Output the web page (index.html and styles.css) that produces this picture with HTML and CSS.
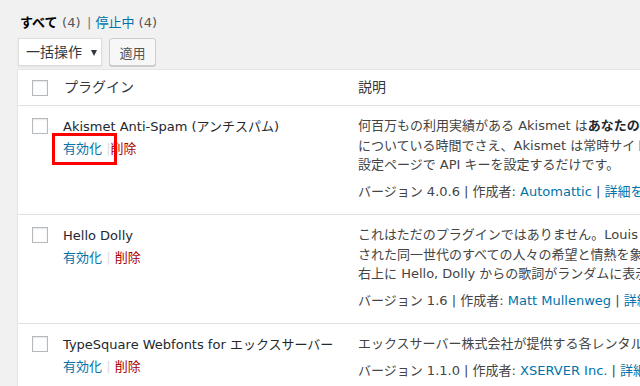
FILE: index.html
```html
<!DOCTYPE html>
<html lang="ja">
<head>
  <meta charset="UTF-8" />
  <title>プラグイン</title>
  <link rel="stylesheet" href="styles.css">
</head>
<body>

  <div class="wrap">
    <!-- Status filters -->
    <ul class="subsubsub">
      <li class="current">すべて <span class="count">(4)</span> <span class="sep">|</span></li>
      <li><a href="#">停止中</a> <span class="count">(4)</span></li>
    </ul>

    <!-- Bulk actions -->
    <div class="tablenav">
      <div class="bulk-select">一括操作<span class="arrow"></span></div>
      <button type="button" class="apply">適用</button>
    </div>

    <table class="plugins">
      <colgroup>
        <col class="col-check">
        <col class="col-title">
        <col class="col-desc">
      </colgroup>
      <thead>
        <tr>
          <th class="check-column"><span class="cb"></span></th>
          <th class="head-title">プラグイン</th>
          <th class="head-desc">説明</th>
        </tr>
      </thead>
      <tbody>
        <tr>
          <th class="check-column"><span class="cb"></span></th>
          <td class="plugin-title">
            <div class="name">Akismet Anti-Spam (アンチスパム)</div>
            <div class="row-actions">
              <span class="marked"><a href="#">有効化</a> | </span><a href="#" class="delete">削除</a>
            </div>
          </td>
          <td class="plugin-desc">
            <p>何百万もの利用実績がある Akismet は<strong>あなたのブログをスパムから保護する最良の方法</strong>といえるでしょう。<br>についている時間でさえ、Akismet は常時サイトを保護し続けます。使い始めるには、Akismet<br>設定ページで API キーを設定するだけです。</p>
            <div class="version">バージョン 4.0.6 | 作成者: <a href="#">Automattic</a> | <a href="#">詳細を表示</a></div>
          </td>
        </tr>
        <tr>
          <th class="check-column"><span class="cb"></span></th>
          <td class="plugin-title">
            <div class="name">Hello Dolly</div>
            <div class="row-actions"><a href="#">有効化</a> | <a href="#" class="delete">削除</a></div>
          </td>
          <td class="plugin-desc">
            <p>これはただのプラグインではありません。Louis Armstrong によって歌われた最も有名な二つの単語に要約<br>された同一世代のすべての人々の希望と情熱を象徴するものなのです。このプラグインを有効にすると、<br>右上に Hello, Dolly からの歌詞がランダムに表示されます。</p>
            <div class="version">バージョン 1.6 | 作成者: <a href="#">Matt Mullenweg</a> | <a href="#">詳細を表示</a></div>
          </td>
        </tr>
        <tr>
          <th class="check-column"><span class="cb"></span></th>
          <td class="plugin-title">
            <div class="name">TypeSquare Webfonts for エックスサーバー</div>
            <div class="row-actions"><a href="#">有効化</a> | <a href="#" class="delete">削除</a></div>
          </td>
          <td class="plugin-desc">
            <p>エックスサーバー株式会社が提供する各レンタルサーバーサービスでWebフォントを利用できるプラグインです。</p>
            <div class="version">バージョン 1.1.0 | 作成者: <a href="#">XSERVER Inc.</a> | <a href="#">詳細を表示</a></div>
          </td>
        </tr>
      </tbody>
    </table>
  </div>

</body>
</html>
```

FILE: styles.css
```css
* {
  box-sizing: border-box;
}

body {
  margin: 0;
  background-color: #f1f1f1;
  color: #444;
  font-family: "DejaVu Sans", "Noto Sans CJK JP", sans-serif;
  font-size: 13px;
  line-height: 19.5px;
  overflow: hidden;
}

a {
  color: #0073aa;
  text-decoration: none;
}

.wrap {
  padding: 13px 0 0 17px;
  width: 1100px;
}

/* status filters */
.subsubsub {
  list-style: none;
  margin: 0 0 6px 3px;
  padding: 0;
  display: flex;
  gap: 4px;
  color: #666;
  line-height: 19px;
}

.subsubsub .current {
  color: #000;
  font-weight: bold;
}

.subsubsub .count {
  color: #555;
  font-weight: normal;
}

.subsubsub .sep {
  color: #72777c;
  font-weight: normal;
  margin-left: 2px;
}

/* bulk actions */
.tablenav {
  display: flex;
  gap: 7px;
  margin: 0 0 3px 1px;
  height: 28px;
}

.bulk-select {
  width: 84px;
  height: 28px;
  background-color: #fff;
  border: 1px solid #ddd;
  box-shadow: 0 1px 2px rgba(0, 0, 0, 0.07);
  color: #32373c;
  font-size: 14px;
  line-height: 26px;
  padding-left: 7px;
  display: flex;
  align-items: center;
}

.bulk-select .arrow {
  width: 0;
  height: 0;
  border-left: 3px solid transparent;
  border-right: 3px solid transparent;
  border-top: 6px solid #32373c;
  margin: 2px 0 0 9px;
}

.apply {
  width: 47px;
  height: 28px;
  padding: 0;
  background-color: #f7f7f7;
  border: 1px solid #ccc;
  border-radius: 3px;
  box-shadow: 0 1px 0 #ccc;
  color: #555;
  font-family: inherit;
  font-size: 13px;
  cursor: pointer;
}

/* table */
.plugins {
  width: 1000px;
  table-layout: fixed;
  border-collapse: separate;
  border-spacing: 0;
  background-color: #fff;
  border: 1px solid #e5e5e5;
  border-right: none;
  box-shadow: 0 1px 1px rgba(0, 0, 0, 0.04);
}

.col-check {
  width: 36px;
}

.col-title {
  width: 294px;
}

.plugins th,
.plugins td {
  text-align: left;
  vertical-align: top;
  font-weight: normal;
  border-bottom: 1px solid #e1e1e1;
}

.plugins thead th {
  padding: 8px 10px;
  height: 36px;
  color: #32373c;
  font-size: 14px;
  line-height: 19px;
}

.plugins thead th.check-column {
  padding: 10px 0 0 14px;
}

.plugins tbody th.check-column {
  padding: 12px 0 0 14px;
}

.cb {
  display: block;
  width: 16px;
  height: 16px;
  border: 1px solid #b4b9be;
  background-color: #fff;
  box-shadow: inset 0 1px 2px rgba(0, 0, 0, 0.1);
}

.plugin-title {
  padding: 10px 9px 13px;
}

.plugin-title .name {
  color: #23282d;
  margin-top: 1px;
  white-space: nowrap;
}

.row-actions {
  padding-top: 2.5px;
  color: #ddd;
}

.row-actions .delete {
  color: #a00;
}

.marked {
  position: relative;
  display: inline-block;
}

/* red highlight drawn over the activate link */
.marked::after {
  content: "";
  position: absolute;
  left: -11px;
  right: -6px;
  top: -6px;
  bottom: -6px;
  border: 3px solid #f00;
}

.plugin-desc {
  padding: 10px 9px 13px 10px;
  white-space: nowrap;
}

.plugin-desc p {
  margin: 0 0 7px;
}

.plugin-desc strong {
  color: #23282d;
}
```
